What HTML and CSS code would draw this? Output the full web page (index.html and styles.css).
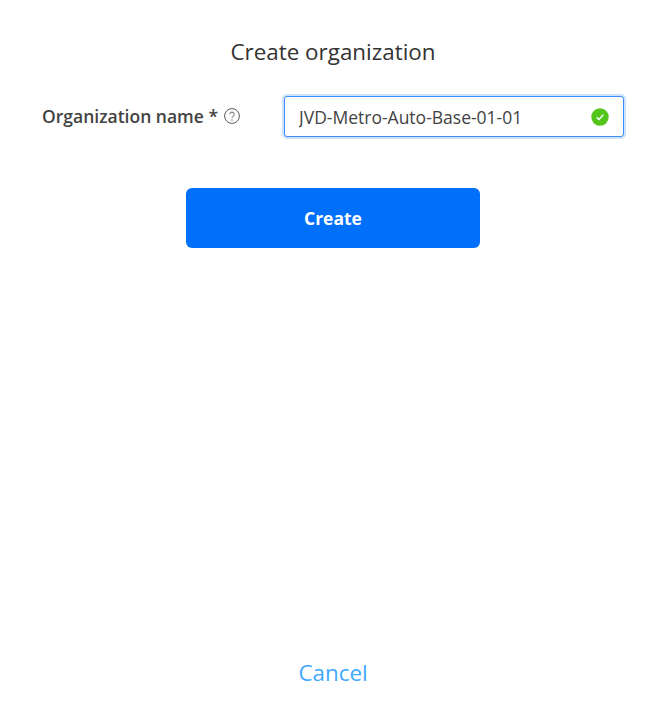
FILE: index.html
```html
<!DOCTYPE html>
<html lang="en">
<head>
    <meta charset="UTF-8">
    <title>Create organization</title>
    <link rel="stylesheet" href="styles.css">
</head>
<body>
    <div class="page">
        <form class="org-form">
            <h1 class="title">Create organization</h1>

            <div class="form-row">
                <div class="label-col">
                    <label class="label" for="org-name">Organization name *</label>
                    <svg class="help-icon" width="16" height="16" viewBox="0 0 16 16" fill="none" stroke="#595959">
                        <circle cx="8" cy="8" r="7.4"/>
                        <path d="M5.8 6.3a2.2 2.2 0 1 1 3.4 1.9c-.9.5-1.2.9-1.2 1.8"/>
                        <circle cx="8" cy="12" r=".65" fill="#595959" stroke="none"/>
                    </svg>
                </div>
                <div class="input-wrap">
                    <input class="input" id="org-name" type="text" value="JVD-Metro-Auto-Base-01-01">
                    <svg class="ok-icon" width="18" height="18" viewBox="0 0 18 18">
                        <circle cx="9" cy="9" r="8.7" fill="#52c41a"/>
                        <path d="M5.6 9.2l2.3 2.2 4.4-4.6" fill="none" stroke="#fff" stroke-width="1.5"/>
                    </svg>
                </div>
            </div>

            <button class="btn" type="button">Create</button>
        </form>

        <a class="cancel" href="#">Cancel</a>
    </div>
</body>
</html>
```

FILE: styles.css
```css
* { margin: 0; padding: 0; box-sizing: border-box; }

body {
    font-family: "Open Sans", sans-serif;
    background-color: #fff;
    height: 713px;
    overflow: hidden;
}

.page {
    height: 713px;
    display: flex;
    flex-direction: column;
    justify-content: space-between;
    align-items: center;
    padding: 37px 0 25px 2px;
}

.org-form {
    width: 100%;
    display: flex;
    flex-direction: column;
    align-items: center;
}

.title {
    font-size: 22.4px;
    font-weight: 400;
    line-height: 30px;
    color: #333;
    margin-bottom: 29px;
}

.form-row {
    width: 100%;
    display: flex;
    align-items: center;
    padding: 0 40px;
    margin-bottom: 51px;
}

.label-col {
    width: 242px;
    display: flex;
    align-items: center;
    margin-bottom: 2px;
}

.label {
    font-size: 17.5px;
    font-weight: 600;
    color: #434343;
}

.help-icon {
    margin-left: 6px;
}

.input-wrap {
    flex: 1;
    position: relative;
}

.input {
    display: block;
    width: 100%;
    height: 41px;
    padding: 0 40px 0 14px;
    font-family: inherit;
    font-size: 17.5px;
    color: #434343;
    border: 1px solid #3a8dff;
    border-radius: 3px;
    box-shadow: 0 0 0 2px #cfe2fb;
    outline: none;
}

.ok-icon {
    position: absolute;
    right: 15px;
    top: 12px;
}

.btn {
    width: 294px;
    height: 60px;
    background-color: #006ffa;
    color: #fff;
    border: none;
    border-radius: 6px;
    font-family: inherit;
    font-size: 17.5px;
    font-weight: 700;
}

.cancel {
    font-size: 22.4px;
    line-height: 30px;
    color: #40a9ff;
    text-decoration: none;
}
```
